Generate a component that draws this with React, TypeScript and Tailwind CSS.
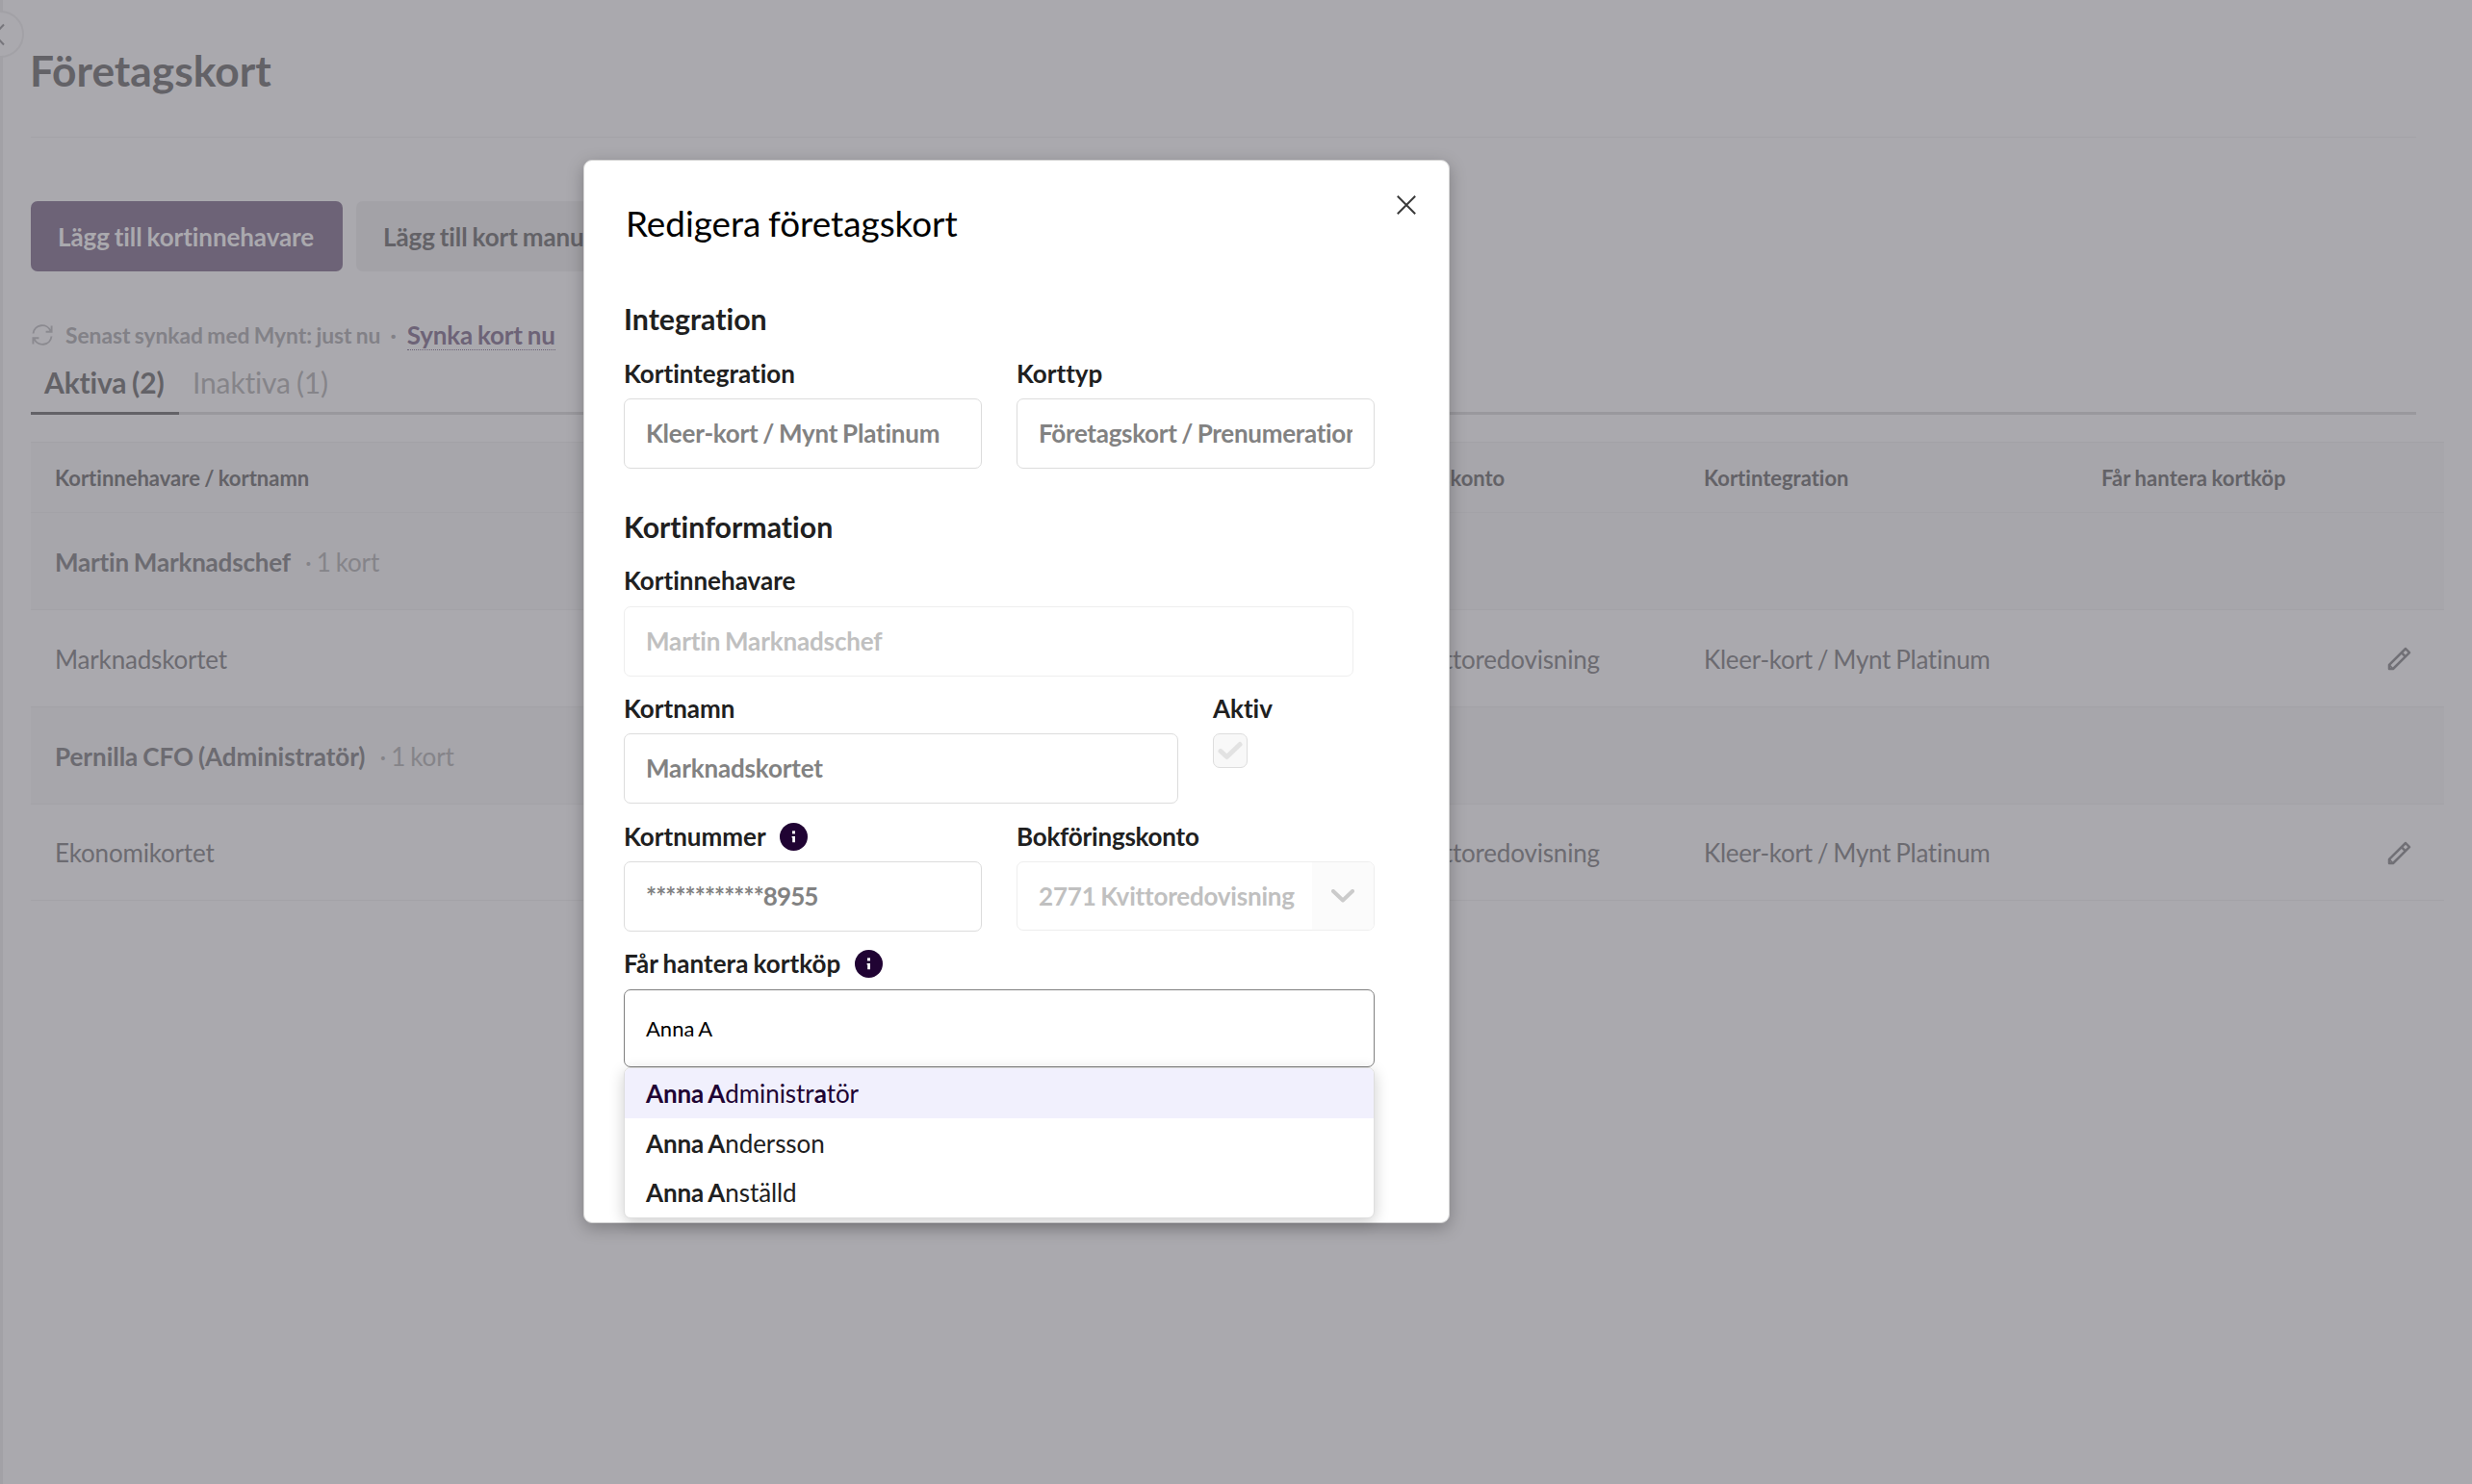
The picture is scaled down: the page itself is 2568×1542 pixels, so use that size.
import type { ReactNode } from 'react';

interface FieldProps {
  label: string;
  info?: boolean;
  className?: string;
  labelClassName?: string;
  bodyClassName?: string;
  children: ReactNode;
}

interface TextBoxProps {
  value: string;
  disabled?: boolean;
  className?: string;
}

interface Option {
  parts: { text: string; bold: boolean }[];
  active: boolean;
}

const options: Option[] = [
  {
    active: true,
    parts: [
      { text: 'Anna A', bold: true },
      { text: 'dministr', bold: false },
      { text: 'a', bold: true },
      { text: 'tör', bold: false },
    ],
  },
  {
    active: false,
    parts: [
      { text: 'Anna A', bold: true },
      { text: 'ndersson', bold: false },
    ],
  },
  {
    active: false,
    parts: [
      { text: 'Anna A', bold: true },
      { text: 'nställd', bold: false },
    ],
  },
];

const groups = [
  { holder: 'Martin Marknadschef', card: 'Marknadskortet', last: false },
  { holder: 'Pernilla CFO (Administratör)', card: 'Ekonomikortet', last: true },
];

function InfoIcon() {
  return (
    <svg width="29" height="29" viewBox="0 0 29 29" className="shrink-0">
      <circle cx="14.5" cy="14.5" r="14.5" fill="#200333" />
      <rect x="13" y="8.4" width="3" height="3" fill="#fff" />
      <path d="M12.6 14 H16 V20.3 H13.2 V15.4 H12.6 Z" fill="#fff" />
    </svg>
  );
}

function PencilIcon() {
  return (
    <svg width="26" height="26" viewBox="0 0 26 26" fill="none" stroke="#717076" strokeWidth="2.5" strokeLinejoin="round">
      <path d="M3 23 V18.8 L20 2 L24 6.1 L7 23 Z" />
      <path d="M15.8 6.2 L19.9 10.3" />
      <path d="M3 18.8 L7 23" strokeWidth="1.6" />
    </svg>
  );
}

function SyncIcon() {
  return (
    <svg width="22" height="22" viewBox="0 0 22 22" fill="none" stroke="#8b8a90" strokeWidth="1.9">
      <path d="M1.5 9.5 A9.4 9.4 0 0 1 19.6 7.2 M20.6 1.6 V7.8 H14.6" />
      <path d="M20.5 12.5 A9.4 9.4 0 0 1 2.4 14.8 M1.4 20.4 V14.2 H7.4" />
    </svg>
  );
}

function Field({ label, info, className = '', labelClassName = 'gap-[14px]', bodyClassName = 'mt-[10px]', children }: FieldProps) {
  return (
    <div className={className}>
      <div className={`flex h-8 items-center text-[26px] leading-8 font-bold text-[#202020] ${labelClassName}`}>
        {label}
        {info && <InfoIcon />}
      </div>
      <div className={bodyClassName}>{children}</div>
    </div>
  );
}

function TextBox({ value, disabled, className = 'tracking-[-0.15px]' }: TextBoxProps) {
  return (
    <div
      className={`h-[73px] rounded-[7px] border px-[22px] text-[26px] leading-[70px] font-bold ${
        disabled ? 'border-[#eeeeee] text-[#c0c0c0]' : 'border-[#dcdcdc] text-[#828282]'
      }`}
    >
      <div className={`overflow-hidden whitespace-nowrap ${className}`}>{value}</div>
    </div>
  );
}

function CardPage() {
  return (
    <div className="flex h-[1542px] w-[2568px] overflow-hidden bg-[#aaa9ae] text-[#636267]">
      <div className="w-[3px] shrink-0 bg-[#a2a1a6]" />
      <div className="w-[2507px] pl-[29px]">
        {/* Collapse handle for the side menu */}
        <div className="absolute top-[11px] left-[-24px] flex h-[49px] w-[49px] items-center justify-end rounded-full border-2 border-[#a2a1a6] bg-[#aaa9ae] pr-[18px]">
          <svg width="12" height="24" viewBox="0 0 12 24" fill="none" stroke="#77767c" strokeWidth="2">
            <path d="M11 1.5 L1 12 L11 22.5" />
          </svg>
        </div>

        <div className="h-[143px] border-b border-[#a3a2a7] pt-[46px]">
          <h1 className="-ml-px text-[44.3px] leading-[53px] font-bold">Företagskort</h1>
        </div>

        <div className="mt-[66px] flex gap-[14px] text-[26px] leading-[75px] font-bold tracking-[-0.08px]">
          <div className="h-[73px] w-[324px] rounded-[7px] bg-[#6d6377] pl-[28px] text-[#aaa9ae]">Lägg till kortinnehavare</div>
          <div className="h-[73px] w-[324px] rounded-[7px] bg-[#a3a2a7] pl-[28px] whitespace-nowrap">Lägg till kort manuellt</div>
        </div>

        <div className="mt-[50px] flex h-8 items-center text-[22.8px] leading-8 font-bold text-[#828187]">
          <div className="ml-px w-[35px]">
            <SyncIcon />
          </div>
          <span className="tracking-[-0.03px]">Senast synkad med Mynt: just nu</span>
          <span className="ml-[10px]">·</span>
          <span className="ml-[11px] border-b border-dotted border-[#6d6377] text-[26px] leading-[30px] tracking-[-0.15px] text-[#6d6377]">
            Synka kort nu
          </span>
        </div>

        <div className="mt-2 flex h-[59px] w-[2478px] border-b-[3px] border-[#99989d] text-[30px] leading-[50px] tracking-[-0.15px]">
          <div className="h-[59px] w-[154px] border-b-[3px] border-[#636267] pl-[14px] font-bold">Aktiva (2)</div>
          <div className="pl-[14px] text-[#858489]">Inaktiva (1)</div>
        </div>

        <div className="mt-7 w-[2507px] border-t border-[#a3a2a7]">
          <div className="flex h-[73px] items-center border-b border-[#a3a2a7] bg-[#a7a6ab] pl-[25px] text-[22px] font-bold">
            <div className="w-[1343px]">Kortinnehavare / kortnamn</div>
            <div className="w-[370px]">Bokföringskonto</div>
            <div className="w-[413px]">Kortintegration</div>
            <div className="tracking-[0.1px]">Får hantera kortköp</div>
          </div>
          {groups.map((group) => (
            <div key={group.holder} className="text-[26px] tracking-[-0.18px] text-[#6c6b71]">
              <div className="flex h-[101px] items-center border-b border-[#a3a2a7] bg-[#a7a6ab] pt-[2px] pl-[25px]">
                <span className={group.last ? 'font-bold tracking-[-0.02px]' : 'font-bold'}>{group.holder}</span>
                <span className="ml-[15px] text-[#858489]">· 1 kort</span>
              </div>
              <div className={`flex items-center border-b border-[#a3a2a7] pt-[2px] pl-[25px] ${group.last ? 'h-[100px]' : 'h-[101px]'}`}>
                <div className="w-[1343px]">{group.card}</div>
                <div className="w-[370px]">2771 Kvittoredovisning</div>
                <div className="w-[709px] tracking-[-0.27px]">Kleer-kort / Mynt Platinum</div>
                <PencilIcon />
              </div>
            </div>
          ))}
        </div>
      </div>
    </div>
  );
}

function EditCardModal() {
  return (
    <div className="absolute top-[166px] left-[606px] h-[1105px] w-[900px] overflow-visible rounded-[9px] border border-[#d4d4d4] bg-white pl-[41px] shadow-[0_5px_17px_rgba(0,0,0,0.26)]">
      <button className="absolute top-[36px] right-[34px]">
        <svg width="20" height="20" viewBox="0 0 20 20" fill="none" stroke="#3a3a3a" strokeWidth="2">
          <path d="M0.8 0.8 L19.2 19.2 M19.2 0.8 L0.8 19.2" />
        </svg>
      </button>

      <h2 className="mt-[43px] pl-[2px] text-[36.8px] leading-[44px] text-black">Redigera företagskort</h2>

      <h3 className="mt-[59px] text-[30.3px] leading-9 font-bold text-[#202020]">Integration</h3>
      <div className="mt-[23px] flex gap-9">
        <Field label="Kortintegration" className="w-[372px]">
          <TextBox value="Kleer-kort / Mynt Platinum" className="tracking-[-0.22px]" />
        </Field>
        <Field label="Korttyp" className="w-[372px]">
          <TextBox value="Företagskort / Prenumeration" className="tracking-[-0.3px]" />
        </Field>
      </div>

      <h3 className="mt-[42px] text-[30.3px] leading-9 font-bold text-[#202020]">Kortinformation</h3>
      <Field label="Kortinnehavare" className="mt-[22px] w-[758px]" bodyClassName="mt-[11px]">
        <TextBox value="Martin Marknadschef" disabled />
      </Field>

      <div className="mt-[17px] flex gap-9">
        <Field label="Kortnamn" className="w-[576px]">
          <TextBox value="Marknadskortet" />
        </Field>
        <Field label="Aktiv">
          <div className="flex size-9 items-center justify-center rounded-[7px] border border-[#dddddd] bg-[#f8f8f8]">
            <svg width="26" height="20" viewBox="0 0 26 20" fill="none" stroke="#e2e2e2" strokeWidth="5" strokeLinecap="round" strokeLinejoin="round">
              <path d="M3 10.5 L9.5 16.5 L23 3.5" />
            </svg>
          </div>
        </Field>
      </div>

      <div className="mt-[18px] flex gap-9">
        <Field label="Kortnummer" info className="w-[372px]">
          <TextBox value="************8955" className="tracking-[-0.9px]" />
        </Field>
        <Field label="Bokföringskonto" className="w-[372px]" labelClassName="tracking-[-0.22px]">
          <div className="flex h-[72px] overflow-hidden rounded-[7px] border border-[#eeeeee] pl-[22px] text-[26px] leading-[70px] font-bold tracking-[-0.2px] text-[#c0c0c0]">
            <div className="flex-1 whitespace-nowrap">2771 Kvittoredovisning</div>
            <div className="flex w-[64px] items-center justify-center bg-[#fbfbfb]">
              <svg width="24" height="14" viewBox="0 0 24 14" fill="none" stroke="#cbcbcb" strokeWidth="4" strokeLinecap="round" strokeLinejoin="round">
                <path d="M2 2 L12 11.5 L22 2" />
              </svg>
            </div>
          </div>
        </Field>
      </div>

      <Field label="Får hantera kortköp" info className="mt-[17px] w-[780px]" labelClassName="gap-[15px] tracking-[0.05px]" bodyClassName="mt-[11px]">
        <div className="relative">
          <div className="h-[81px] rounded-[7px] border border-[#808080] px-[22px] text-[22px] leading-[79px] text-black">Anna A</div>
          <div className="absolute top-[81px] left-0 w-[780px] overflow-hidden rounded-[7px] border border-[#dedede] bg-white shadow-[0_4px_16px_rgba(0,0,0,0.2)]">
            {options.map((option) => (
              <div
                key={option.parts[1].text}
                className={`h-[51.6px] px-[22px] text-[26px] leading-[52.4px] tracking-[-0.08px] ${
                  option.active ? 'bg-[#f1f0fd] text-[#200333]' : 'text-[#202020]'
                }`}
              >
                {option.parts.map((part, i) => (
                  <span key={i} className={part.bold ? 'font-bold' : ''}>
                    {part.text}
                  </span>
                ))}
              </div>
            ))}
          </div>
        </div>
      </Field>
    </div>
  );
}

export default function App() {
  return (
    <div className="relative h-[1542px] w-[2568px] overflow-hidden font-['Lato',sans-serif] [font-variant-ligatures:none] **:[word-spacing:-0.05em]">
      <CardPage />
      <EditCardModal />
    </div>
  );
}
